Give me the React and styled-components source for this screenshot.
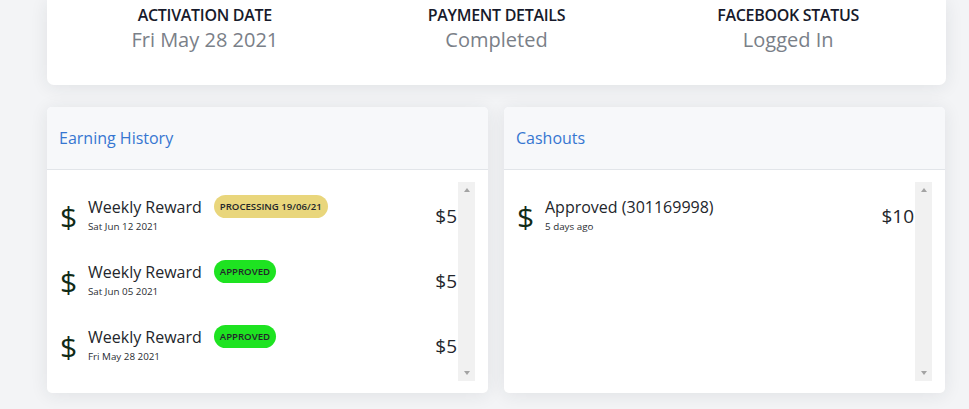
import React from 'react';
import styled, { createGlobalStyle } from 'styled-components';

const GlobalStyle = createGlobalStyle`
  html, body {
    margin: 0;
    padding: 0;
    background: #f3f4f6;
    font-family: "Open Sans", "Noto Sans", sans-serif;
  }
`;

const Page = styled.div`
  padding: 0 23px 16px 47px;
  display: flex;
  flex-direction: column;
  gap: 22px;
`;

const StatusCard = styled.section`
  background: #fff;
  border-radius: 0 0 7px 7px;
  box-shadow: 0 2px 18px rgba(30, 40, 60, 0.09);
  padding: 4px 12px 0;
  height: 81px;
  display: grid;
  grid-template-columns: repeat(3, 1fr);
`;

const Stat = styled.div`
  display: flex;
  flex-direction: column;
  align-items: center;
`;

const StatLabel = styled.div`
  font-size: 16px;
  font-weight: 600;
  color: #171a2b;
  line-height: 22px;
  letter-spacing: -0.3px;
`;

const StatValue = styled.div`
  font-size: 20px;
  color: #7a8088;
  line-height: 27px;
`;

const Columns = styled.div`
  display: grid;
  grid-template-columns: 441px 441px;
  gap: 16px;
`;

const Panel = styled.section`
  background: #fff;
  border-radius: 5px;
  box-shadow: 0 2px 18px rgba(30, 40, 60, 0.09);
  overflow: hidden;
  height: 286px;
  display: flex;
  flex-direction: column;
`;

const PanelHeader = styled.header`
  height: 62px;
  background: #f7f8fa;
  border-bottom: 1px solid #e2e5e9;
  display: flex;
  align-items: center;
  padding: 0 12px;
  font-size: 16px;
  color: #3676d1;
`;

const PanelBody = styled.div`
  flex: 1;
  padding: 12px 13px 12px 12px;
  min-height: 0;
`;

/* list plus an always-visible (empty) scroll track, as in the screenshot */
const Scroller = styled.div`
  height: 199px;
  display: flex;
`;

const List = styled.div`
  flex: 1;
  min-width: 0;
  overflow: hidden;
`;

const Track = styled.div`
  width: 17px;
  background: #f1f1f1;
  display: flex;
  flex-direction: column;
  justify-content: space-between;
  align-items: center;
  padding: 6px 0;
  box-sizing: border-box;
`;

const Arrow = styled.span`
  width: 0;
  height: 0;
  border-left: 3.5px solid transparent;
  border-right: 3.5px solid transparent;
  ${p =>
    p.$down
      ? 'border-top: 4px solid #a3a3a3;'
      : 'border-bottom: 4px solid #a3a3a3;'}
`;

const Row = styled.div`
  height: 65px;
  display: flex;
  align-items: center;
  padding-left: 1px;
  padding-right: 1px;
`;

const Dollar = styled.span`
  width: 28px;
  font-size: 30px;
  line-height: 1;
  color: #102a16;
  margin-top: 4px;
`;

const Info = styled.div`
  display: flex;
  flex-direction: column;
`;

const TitleLine = styled.div`
  display: flex;
  align-items: center;
`;

const Title = styled.span`
  font-size: 16px;
  color: #23262b;
  line-height: 22px;
`;

const Sub = styled.span`
  font-size: 9.8px;
  color: #2a2d33;
  line-height: 14px;
  margin-top: 2px;
`;

const Badge = styled.span`
  margin-left: 12px;
  height: 23px;
  padding: 0 6px;
  border-radius: 12px;
  display: inline-flex;
  align-items: center;
  font-size: 9.6px;
  font-weight: 600;
  color: #23262b;
  background: ${p => (p.$tone === 'pending' ? '#e9d67c' : '#1ee321')};
`;

const Amount = styled.span`
  margin-left: auto;
  font-size: 19px;
  color: #23262b;
  margin-top: 3px;
`;

const earnings = [
  { date: 'Sat Jun 12 2021', status: 'PROCESSING 19/06/21', tone: 'pending' },
  { date: 'Sat Jun 05 2021', status: 'APPROVED', tone: 'ok' },
  { date: 'Fri May 28 2021', status: 'APPROVED', tone: 'ok' },
];

const ScrollBox = ({ children }) => (
  <Scroller>
    <List>{children}</List>
    <Track>
      <Arrow />
      <Arrow $down />
    </Track>
  </Scroller>
);

export default function App() {
  return (
    <>
      <GlobalStyle />
      <Page>
        <StatusCard>
          <Stat>
            <StatLabel>ACTIVATION DATE</StatLabel>
            <StatValue>Fri May 28 2021</StatValue>
          </Stat>
          <Stat>
            <StatLabel>PAYMENT DETAILS</StatLabel>
            <StatValue>Completed</StatValue>
          </Stat>
          <Stat>
            <StatLabel>FACEBOOK STATUS</StatLabel>
            <StatValue>Logged In</StatValue>
          </Stat>
        </StatusCard>
        <Columns>
          <Panel>
            <PanelHeader>Earning History</PanelHeader>
            <PanelBody>
              <ScrollBox>
                {earnings.map((e, i) => (
                  <Row key={i}>
                    <Dollar>$</Dollar>
                    <Info>
                      <TitleLine>
                        <Title>Weekly Reward</Title>
                        <Badge $tone={e.tone}>{e.status}</Badge>
                      </TitleLine>
                      <Sub>{e.date}</Sub>
                    </Info>
                    <Amount>$5</Amount>
                  </Row>
                ))}
              </ScrollBox>
            </PanelBody>
          </Panel>
          <Panel>
            <PanelHeader>Cashouts</PanelHeader>
            <PanelBody>
              <ScrollBox>
                <Row>
                  <Dollar>$</Dollar>
                  <Info>
                    <Title>Approved (301169998)</Title>
                    <Sub>5 days ago</Sub>
                  </Info>
                  <Amount>$10</Amount>
                </Row>
              </ScrollBox>
            </PanelBody>
          </Panel>
        </Columns>
      </Page>
    </>
  );
}
